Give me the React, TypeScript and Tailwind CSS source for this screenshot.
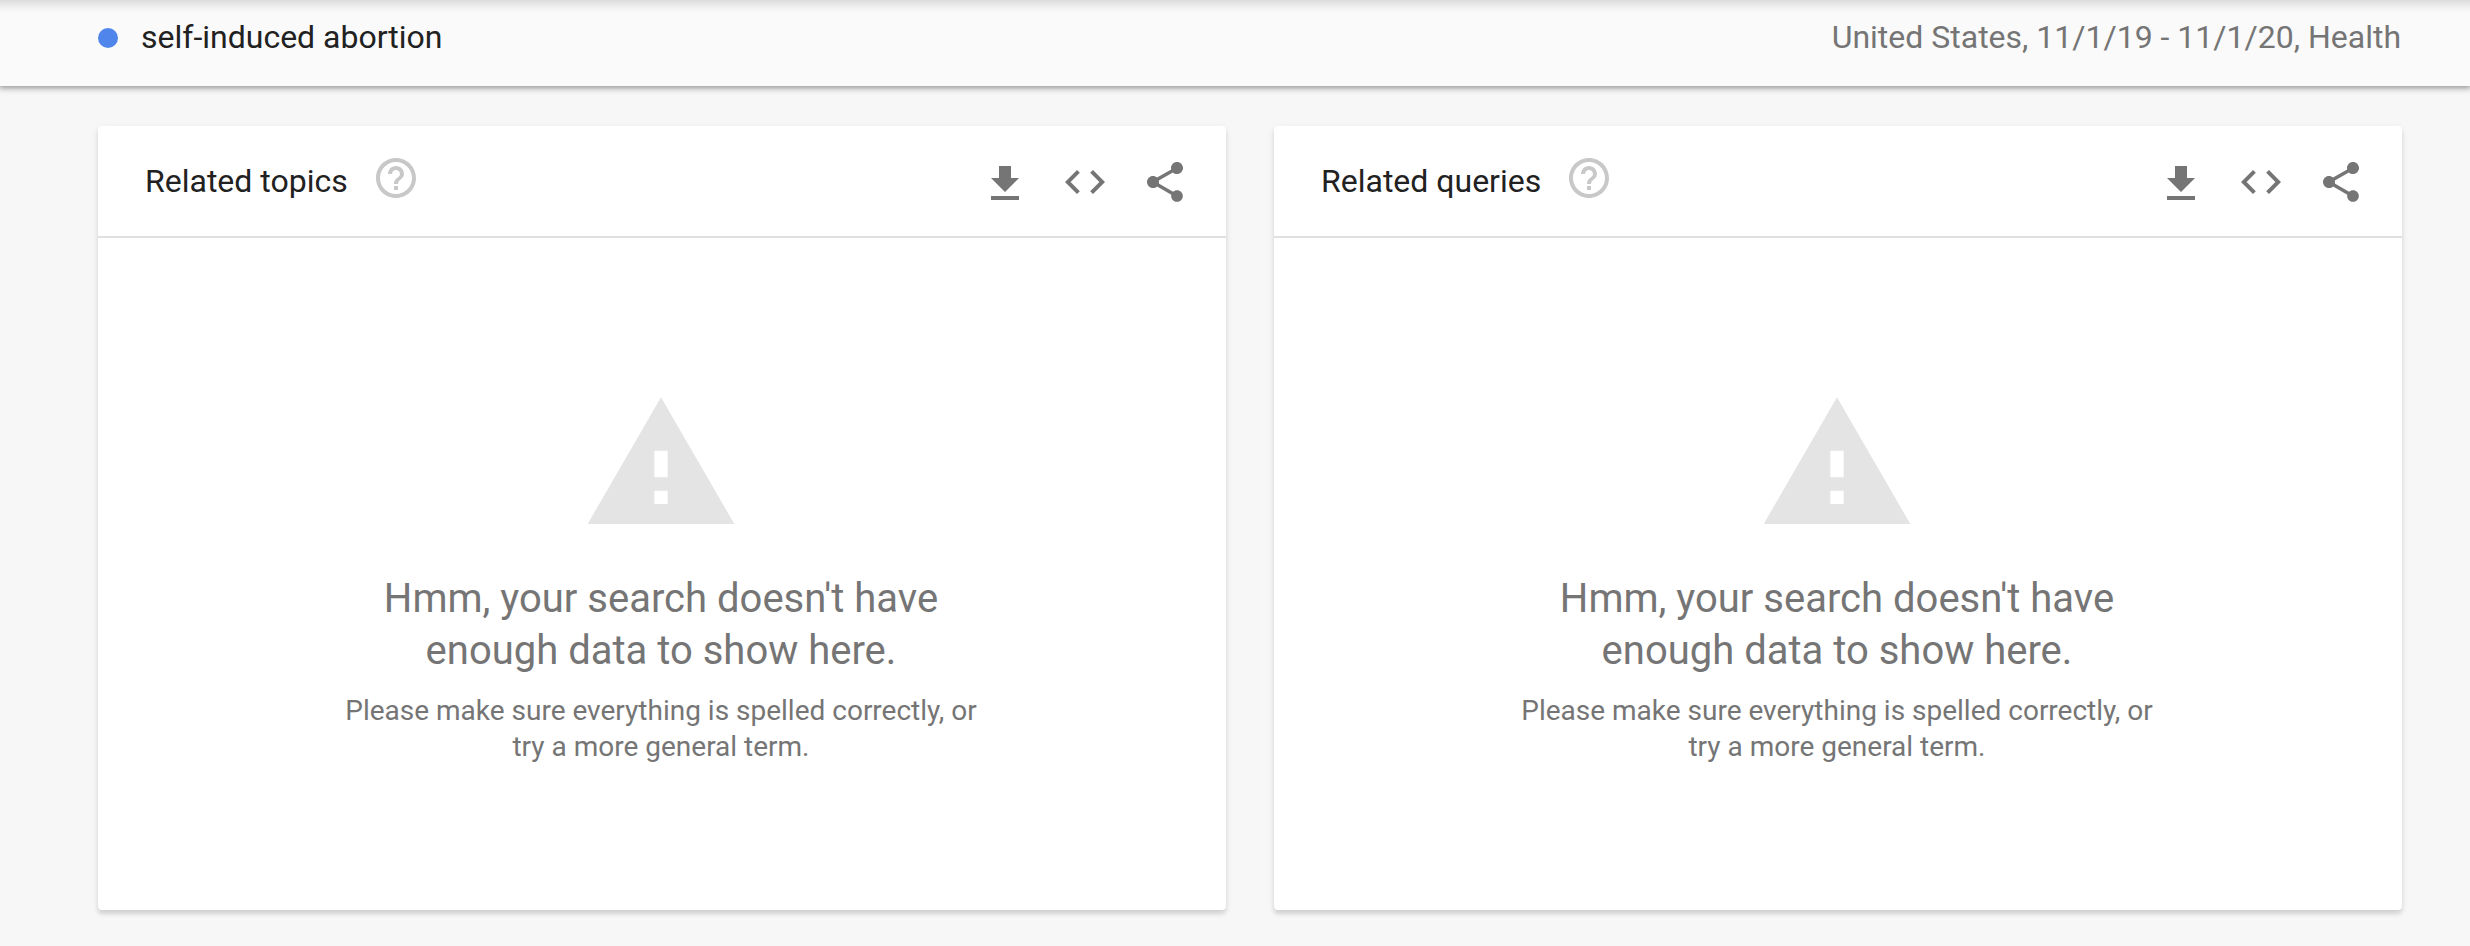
type IconProps = { d: string; className: string };

function Icon({ d, className }: IconProps) {
  return (
    <svg viewBox="0 0 24 24" fill="currentColor" aria-hidden="true" className={className}>
      <path d={d} />
    </svg>
  );
}

const icons = {
  help: "M11 18h2v-2h-2v2zm1-16C6.48 2 2 6.48 2 12s4.48 10 10 10 10-4.48 10-10S17.52 2 12 2zm0 18c-4.41 0-8-3.59-8-8s3.59-8 8-8 8 3.59 8 8-3.59 8-8 8zm0-14c-2.21 0-4 1.79-4 4h2c0-1.1.9-2 2-2s2 .9 2 2c0 2-3 1.75-3 5h2c0-2.25 3-2.5 3-5 0-2.21-1.79-4-4-4z",
  download: "M19 10h-4V4H9v6H5l7 7 7-7zM5 19v2h14v-2H5z",
  code: "M9.4 16.6L4.8 12l4.6-4.6L8 6l-6 6 6 6 1.4-1.4zm5.2 0l4.6-4.6-4.6-4.6L16 6l6 6-6 6-1.4-1.4z",
  share: "M18 16.08c-.76 0-1.44.3-1.96.77L8.91 12.7c.05-.23.09-.46.09-.7s-.04-.47-.09-.7l7.05-4.11c.54.5 1.25.81 2.04.81 1.66 0 3-1.34 3-3s-1.34-3-3-3-3 1.34-3 3c0 .24.04.47.09.7L8.04 9.81C7.5 9.31 6.79 9 6 9c-1.66 0-3 1.34-3 3s1.34 3 3 3c.79 0 1.5-.31 2.04-.81l7.12 4.16c-.05.21-.08.43-.08.65 0 1.61 1.31 2.92 2.92 2.92s2.92-1.31 2.92-2.92-1.31-2.92-2.92-2.92z",
  warning: "M1 21h22L12 2 1 21zm12-3h-2v-2h2v2zm0-4h-2v-4h2v4z",
};

function Card({ title }: { title: string }) {
  return (
    <section className="flex h-[784px] w-[1128px] flex-col rounded-[4px] bg-white shadow-[0_4px_4px_0_rgba(0,0,0,0.12),0_2px_8px_0_rgba(0,0,0,0.06)]">
      <header className="flex h-28 items-center border-b-2 border-[#e0e0e0] pr-[37px] pl-[47px]">
        <h2 className="text-[32px] leading-10 text-[#212121]">{title}</h2>
        <button aria-label="Help" className="mb-1.5 ml-6 text-[#c8c8c8]">
          <Icon d={icons.help} className="size-12" />
        </button>
        <div className="mt-0.5 ml-auto flex gap-8 text-[#757575]">
          <button aria-label="Download">
            <Icon d={icons.download} className="size-12" />
          </button>
          <button aria-label="Embed">
            <Icon d={icons.code} className="size-12" />
          </button>
          <button aria-label="Share">
            <Icon d={icons.share} className="size-12" />
          </button>
        </div>
      </header>
      <div className="flex flex-col items-center pt-[146px] pr-0.5 text-center text-[#757575]">
        <Icon d={icons.warning} className="size-40 text-[#e4e4e4]" />
        <p className="mt-[29px] text-[40px] leading-[52px]">
          Hmm, your search doesn't have
          <br />
          enough data to show here.
        </p>
        <p className="mt-4 text-[28px] leading-9">
          Please make sure everything is spelled correctly, or
          <br />
          try a more general term.
        </p>
      </div>
    </section>
  );
}

export default function App() {
  return (
    <div className="h-[946px] w-[2470px] overflow-hidden bg-[#f7f7f7] font-[Roboto,sans-serif]">
      <div className="flex h-[86px] items-start justify-between bg-[linear-gradient(to_bottom,#dcdcdc_0px,#e4e4e4_3px,#f2f2f2_8px,#fafafa_14px)] pt-[17px] pr-[69px] pl-[98px] text-[32px] leading-10 shadow-[0_1px_6px_1px_rgba(0,0,0,0.42)]">
        <div className="flex items-center text-[#212121]">
          <span className="mt-0.5 mr-[23px] size-5 rounded-full bg-[#5086ec]" />
          self-induced abortion
        </div>
        <div className="text-[#757575]">United States, 11/1/19 - 11/1/20, Health</div>
      </div>
      <main className="flex gap-12 pt-10 pl-[98px]">
        <Card title="Related topics" />
        <Card title="Related queries" />
      </main>
    </div>
  );
}
